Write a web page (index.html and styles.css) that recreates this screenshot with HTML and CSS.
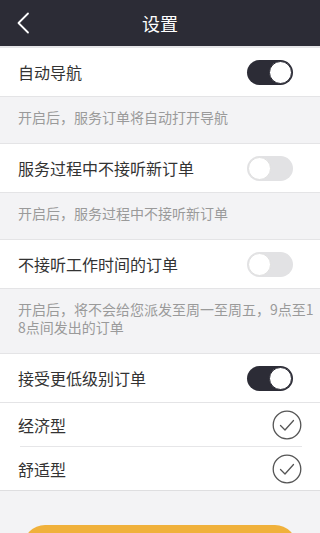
FILE: index.html
```html
<!DOCTYPE html>
<html lang="zh-CN">
<head>
  <meta charset="UTF-8">
  <meta name="viewport" content="width=device-width, initial-scale=1.0">
  <title>设置</title>
  <link rel="stylesheet" href="styles.css">
</head>
<body>
  <header class="top-bar">
    <button class="back-btn" aria-label="返回">
      <svg width="14" height="22" viewBox="0 0 14 22"><path d="M12 1.5 L2.5 11 L12 20.5" fill="none" stroke="#fff" stroke-width="1.8" stroke-linecap="round" stroke-linejoin="round"/></svg>
    </button>
    <h1>设置</h1>
  </header>

  <div class="row">
    <span>自动导航</span>
    <span class="switch on"><i></i></span>
  </div>
  <p class="desc">开启后，服务订单将自动打开导航</p>

  <div class="row">
    <span>服务过程中不接听新订单</span>
    <span class="switch"><i></i></span>
  </div>
  <p class="desc">开启后，服务过程中不接听新订单</p>

  <div class="row">
    <span>不接听工作时间的订单</span>
    <span class="switch"><i></i></span>
  </div>
  <p class="desc wide">开启后，将不会给您派发至周一至周五，9点至18点间发出的订单</p>

  <div class="row">
    <span>接受更低级别订单</span>
    <span class="switch on"><i></i></span>
  </div>
  <div class="options">
    <div class="option">
      <span>经济型</span>
      <svg class="check" width="30" height="30" viewBox="0 0 30 30"><circle cx="15" cy="15" r="13.8" fill="none" stroke="#555" stroke-width="1.3"/><path d="M8.5 15.5 L13 20 L21.5 10.5" fill="none" stroke="#555" stroke-width="1.3" stroke-linecap="round" stroke-linejoin="round"/></svg>
    </div>
    <div class="option">
      <span>舒适型</span>
      <svg class="check" width="30" height="30" viewBox="0 0 30 30"><circle cx="15" cy="15" r="13.8" fill="none" stroke="#555" stroke-width="1.3"/><path d="M8.5 15.5 L13 20 L21.5 10.5" fill="none" stroke="#555" stroke-width="1.3" stroke-linecap="round" stroke-linejoin="round"/></svg>
    </div>
  </div>

  <button class="save-btn" aria-label="保存"></button>
</body>
</html>
```

FILE: styles.css
```css
/* General */
body {
  margin: 0;
  background: #f3f3f5;
  font-family: "Noto Sans CJK SC", "Noto Sans", sans-serif;
  color: #333;
}

/* Top bar */
.top-bar {
  height: 46px;
  background: #2c2c36;
  display: flex;
  align-items: center;
  justify-content: center;
  position: relative;
  border-bottom: 2px solid #e6e6e8;
}

.top-bar h1 {
  margin: 0;
  font-size: 18px;
  font-weight: normal;
  color: #fff;
}

.back-btn {
  position: absolute;
  left: 12px;
  top: 12px;
  padding: 0 4px;
  border: none;
  background: none;
  display: flex;
}

/* Rows */
.row {
  height: 48px;
  background: #fff;
  display: flex;
  align-items: center;
  justify-content: space-between;
  padding: 0 27px 0 18px;
  font-size: 16px;
  border-bottom: 1px solid #e4e4e6;
}

.desc {
  margin: 0;
  padding: 11px 14px 17px 18px;
  font-size: 14px;
  line-height: 18px;
  color: #9a9a9a;
  word-break: break-all;
  border-bottom: 1px solid #e4e4e6;
}

.desc.wide {
  padding-right: 3px;
}

/* Switch */
.switch {
  width: 46px;
  height: 25px;
  border-radius: 13px;
  background: #e2e2e4;
  display: flex;
  align-items: center;
  padding: 0 1px;
  box-sizing: border-box;
}

.switch i {
  width: 23px;
  height: 23px;
  border-radius: 50%;
  background: #fff;
  box-sizing: border-box;
  border: 1px solid #e0e0e0;
}

.switch.on {
  background: #2c2c36;
  justify-content: flex-end;
}

.switch.on i {
  border: 1px solid #2c2c36;
}

/* Options */
.options {
  background: #fff;
  border-bottom: 1px solid #dedee0;
}

.option {
  height: 43px;
  margin: 0 18px;
  display: flex;
  align-items: center;
  justify-content: space-between;
  font-size: 16px;
}

.option + .option {
  border-top: 1px solid #e6e6e8;
  margin-left: 20px;
}

.option + .option span {
  margin-left: -2px;
}

/* Save button */
.save-btn {
  display: block;
  margin: 34px 23px 20px;
  width: calc(100% - 46px);
  height: 44px;
  border: none;
  border-radius: 22px;
  background: #f0b13b;
}
```
